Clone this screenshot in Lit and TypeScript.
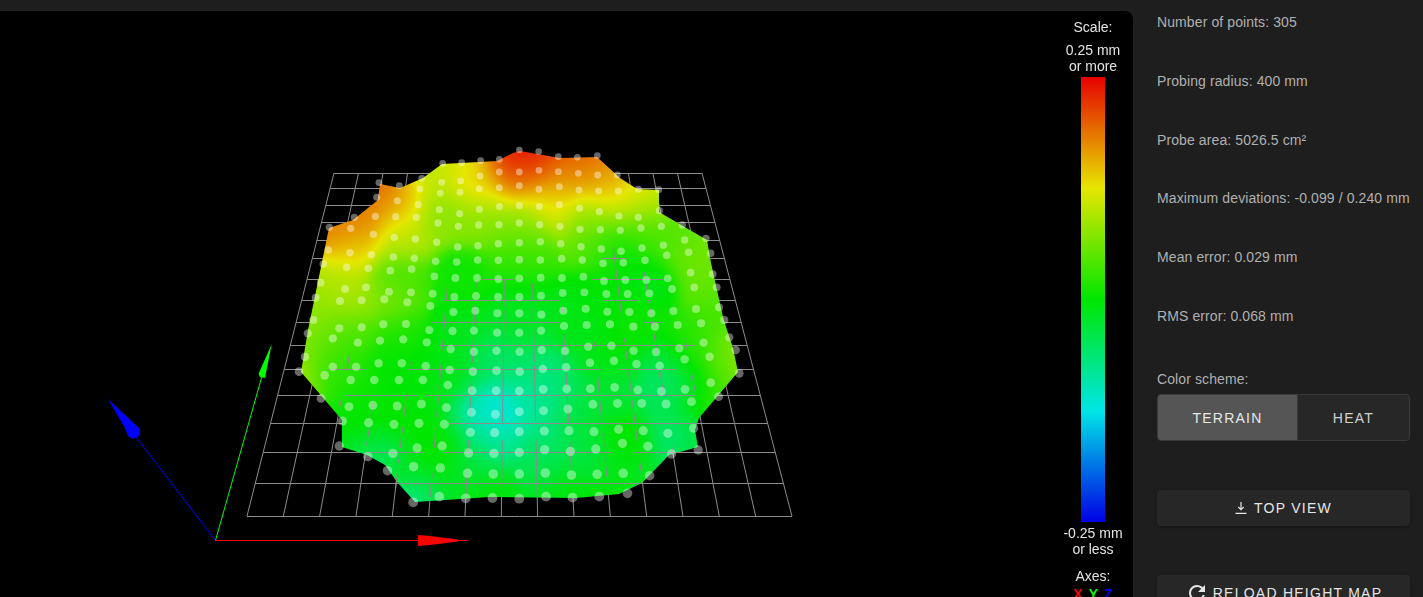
import {LitElement, html, css, svg} from 'lit';
import {customElement} from 'lit/decorators.js';

type P = [number, number];

// surface outline, in page pixels
const OUTLINE: P[] = [
  [329, 228], [353, 220], [378, 200], [380, 184], [400, 188], [423, 178], [442, 164], [497, 161],
  [513, 153], [520, 151], [560, 158], [597, 157], [620, 178], [637, 189], [659, 190], [659, 212],
  [707, 240], [711, 263], [723, 317], [727, 330], [733, 348], [738, 372], [699, 418], [695, 430],
  [698, 447], [669, 455], [642, 483], [619, 494], [576, 498], [490, 497], [415, 502], [397, 482],
  [385, 465], [367, 455], [342, 447], [342, 420], [301, 372], [308, 330],
];

// height samples: x, y, value (-1 blue .. 1 red)
const HEIGHTS: [number, number, number][] = [
  [520, 150, 1.05], [505, 160, .85], [540, 160, .88], [590, 160, .82], [610, 175, .68], [470, 165, .48], [430, 175, .42], [385, 190, .8],
  [360, 220, .72], [335, 232, .75], [400, 205, .55], [440, 215, .3], [480, 190, .55], [520, 178, .72],
  [560, 178, .7], [600, 182, .6], [640, 195, .5], [655, 200, .4], [620, 200, .45], [550, 200, .48],
  [480, 215, .27], [520, 220, .33], [590, 215, .32], [640, 225, .2], [650, 235, .12], [400, 240, .4], [350, 250, .5], [330, 280, .38], [315, 310, .3], [350, 300, .38],
  [390, 298, .3], [400, 280, .12], [460, 280, .03], [520, 245, .18], [520, 265, .08], [600, 240, .18], [620, 250, -.02],
  [680, 235, .15], [705, 250, .25], [687, 247, .25], [650, 280, -.05], [707, 280, .22], [720, 310, .15],
  [600, 300, 0], [520, 300, -.05], [520, 330, -.1], [460, 330, -.05], [400, 330, .05], [350, 330, .15],
  [580, 320, -.05], [640, 320, .03], [700, 340, .12], [730, 350, .3], [735, 372, .28], [690, 345, .05],
  [308, 337, .3], [301, 372, .4], [326, 350, .18], [347, 373, .1], [330, 369, .05], [383, 373, 0],
  [418, 370, 0], [454, 367, -.05], [490, 363, -.22], [525, 373, -.25], [597, 363, -.05], [615, 363, .02],
  [668, 363, -.12], [704, 363, .18], [686, 380, -.25], [661, 390, -.32], [615, 387, -.2], [561, 387, -.27],
  [500, 410, -.5], [472, 413, -.4], [536, 407, -.35], [579, 403, -.12], [618, 400, -.03], [668, 400, -.08],
  [700, 397, .08], [719, 387, .12], [440, 433, 0], [400, 423, .03], [365, 430, .05], [347, 443, 0],
  [383, 453, -.22], [365, 453, -.28], [400, 470, -.02], [436, 457, .02], [469, 463, -.12], [415, 497, -.35],
  [436, 493, -.05], [490, 440, -.32], [544, 430, -.25], [580, 427, -.12], [622, 443, .05], [636, 447, .02],
  [668, 440, -.3], [686, 443, -.2], [697, 447, -.05], [597, 453, -.15], [544, 463, -.18], [561, 490, -.02],
  [615, 490, 0], [490, 493, -.02], [633, 473, -.1], [360, 400, 0], [420, 400, -.02], [440, 385, -.05],
];

const GRID_ROWS = [173, 188, 205, 222, 240, 258, 279, 300, 322, 345, 369, 395, 423, 452, 483, 516];

// grid pieces that poke through the surface: y, x1, x2
const POKE_H: [number, number, number][] = [
  [258, 602, 627], [279, 482, 513], [279, 592, 663], [300, 444, 559], [300, 604, 637], [300, 647, 652],
  [322, 432, 559], [322, 643, 661], [345, 440, 695], [369, 329, 365], [369, 408, 601], [369, 620, 676],
  [395, 345, 417], [395, 426, 695], [423, 449, 699], [452, 365, 424], [452, 444, 611], [452, 633, 697],
  [483, 397, 642],
];

// same for the column lines: column, y1, y2
const POKE_V: [number, number, number][] = [
  [2, 353, 370], [2, 398, 408], [3, 397, 417], [3, 427, 445], [4, 362, 370], [4, 395, 418], [4, 427, 448],
  [4, 452, 463], [4, 473, 490], [5, 285, 300], [5, 312, 330], [5, 340, 350], [5, 363, 390], [5, 397, 417],
  [5, 427, 448], [5, 473, 497], [6, 280, 300], [6, 305, 325], [6, 330, 363], [6, 367, 393], [6, 397, 420],
  [6, 440, 497], [7, 280, 307], [7, 310, 363], [7, 364, 422], [7, 440, 497], [8, 283, 302], [8, 308, 362],
  [8, 365, 422], [8, 440, 497], [9, 307, 313], [9, 333, 363], [9, 373, 387], [9, 396, 423], [9, 442, 478],
  [10, 342, 352], [10, 373, 393], [10, 400, 423], [10, 433, 447], [10, 457, 477], [11, 247, 317],
  [11, 338, 360], [11, 372, 393], [11, 400, 423], [11, 427, 443], [11, 463, 477], [12, 272, 297],
  [12, 300, 327], [12, 330, 360], [12, 370, 397], [12, 447, 457], [13, 338, 350], [13, 373, 395],
  [13, 415, 420],
];

// probe points read off in rows, upper half then lower half
const top = (x: number, y: number): P => [300 + x / 3, 140 + y / 3];
const low = (x: number, y: number): P => [240 + x / 2.8, 330 + y / 3];
const rows = (list: number[][], map: (x: number, y: number) => P) =>
  list.flatMap(r => {
    const out: P[] = [];
    for (let i = 0; i < r.length; i += 2) out.push(map(r[i], r[i + 1]));
    return out;
  });

const POINTS: P[] = [
  ...rows([
    [428,70,485,68,542,62,598,58,658,30,716,35,775,50,832,52,892,47],
    [365,115,425,127,482,123,540,108,598,96,658,96,717,91,775,95,835,100,893,105,952,105],
    [237,128,298,137,360,147,421,160,480,157,538,146,598,143,658,137,717,148,778,140,837,150,896,153,955,153,1015,148,1076,149],
    [230,172,292,182,355,194,418,209,479,221,538,208,598,200,658,197,718,200,778,194,839,205,898,215,957,228,1015,232,1078,212],
    [163,232,226,229,287,230,349,232,414,249,475,259,536,255,597,254,658,249,719,254,780,259,840,268,901,269,961,271,1023,264,1084,259,1147,255],
    [88,262,152,265,220,283,283,292,346,297,410,307,473,321,534,317,595,311,658,308,721,305,782,311,843,320,904,327,963,334,1026,324,1090,316,1154,300,1218,295],
    [85,330,150,338,214,344,280,351,343,355,407,364,470,366,533,360,595,361,658,359,721,360,785,356,847,360,909,370,970,368,1035,361,1100,346,1166,337,1232,340],
    [70,372,140,382,205,385,271,392,335,387,403,409,466,414,531,414,595,417,658,415,722,413,786,414,850,410,912,423,976,420,1039,420,1103,415,1172,398,1238,402],
    [62,428,135,447,198,442,267,455,333,457,398,461,463,471,528,468,594,471,658,471,723,467,788,459,853,457,919,462,983,462,1048,460,1116,447,1183,442,1250,442],
    [47,473,120,483,185,481,253,478,322,487,391,498,460,516,526,512,592,520,658,520,724,524,790,512,857,506,922,515,988,516,1054,520,1120,513,1188,507,1257,502],
    [40,540,118,565,185,562,250,553,318,552],
    [792,558,860,555,930,553,1000,560,1065,560,1133,555,1203,550,1273,540],
  ], top),
  ...rows([
    [530,0,595,3,655,2,720,8,782,8,843,2],
    [190,10,260,25,330,38,392,32,457,28,523,37,590,57,655,65,718,62,783,65,845,60,910,63,975,50,1040,47,1102,62,1165,66,1230,55,1298,38,1370,22],
    [182,80,260,110,325,110,388,100,453,100,520,108,587,120,652,125,718,122,783,125,848,117,913,112,980,98,1047,92,1110,102,1175,107,1245,88,1315,80,1388,60],
    [165,125,237,136,310,150,376,150,445,150,512,150,582,165,650,182,717,182,782,183,849,178,915,177,981,176,1049,172,1114,180,1180,184,1246,178,1318,158,1398,130],
    [227,205,305,230,372,226,440,228,508,222,578,233,648,247,715,253,782,245,850,242,918,237,988,223,1057,220,1125,220,1193,222,1264,215,1340,200],
    [287,273,360,278,431,283,501,280,572,283,645,307,713,308,782,305,852,303,921,302,991,305,1060,298,1129,302,1198,310,1270,295],
    [278,348,358,380,428,370,496,354,566,348,640,369,711,370,782,367,853,359,925,364,996,357,1071,340,1142,349,1208,372,1283,360],
    [413,422,486,410,561,414,637,430,709,432,782,432,855,429,928,435,1000,433,1073,430,1147,437],
    [485,517,558,500,632,505,707,504,782,506,857,500,931,503,1006,500,1085,490],
  ], low),
];

const colorAt = (v: number): number[] => {
  // same stops as the scale bar: red, yellow, green, cyan, blue
  const stops = [[230, 0, 0], [230, 230, 0], [0, 230, 0], [0, 230, 230], [0, 0, 230]];
  const t = Math.min(3.999, Math.max(0, (1 - v) * 2));
  const i = Math.floor(t);
  const f = t - i;
  return stops[i].map((c, k) => c + (stops[i + 1][k] - c) * f);
};

const columnX = (col: number, y: number) => {
  const t = (y - 173) / 343;
  return 334 - 87 * t + col * (24.53 + 11.8 * t);
};

@customElement('height-map-view')
export class HeightMapView extends LitElement {
  static styles = css`
    :host {
      display: block;
      position: relative;
      flex: 1;
      margin-top: 11px;
      background: #000;
      border-top-right-radius: 8px;
      overflow: hidden;
    }
    canvas {
      display: block;
    }
    .legend {
      position: absolute;
      top: 0;
      right: 8px;
      width: 64px;
      display: flex;
      flex-direction: column;
      align-items: center;
      padding-top: 8px;
      font: 14px/16px 'Liberation Sans', Arial, sans-serif;
      color: #e4e4e4;
      text-align: center;
    }
    .range {
      margin-top: 7px;
    }
    .bar {
      width: 24px;
      height: 445px;
      margin: 3px 0;
      background: linear-gradient(#e60000, #e6e600 25%, #00e600 50%, #00e6e6 75%, #0000e6);
    }
    .range.min {
      margin-top: 0;
    }
    .axes {
      margin-top: 11px;
    }
    .names {
      display: flex;
      gap: 6px;
      margin-top: 2px;
      font-weight: 700;
    }
    .x {
      color: #f00;
    }
    .y {
      color: #0f0;
    }
    .z {
      color: #00f;
    }
  `;

  override firstUpdated() {
    const canvas = this.renderRoot.querySelector('canvas') as HTMLCanvasElement;
    const ctx = canvas.getContext('2d')!;
    ctx.translate(0, -11);
    this.drawGrid(ctx);
    this.drawSurface(ctx);
    this.drawPokes(ctx);

    ctx.fillStyle = 'rgba(255,255,255,.4)';
    for (const [x, y] of POINTS) {
      ctx.beginPath();
      ctx.arc(x, y, 3.3 + (y - 150) / 350 * 1.6, 0, Math.PI * 2);
      ctx.fill();
    }
    this.drawAxes(ctx);
  }

  private drawGrid(ctx: CanvasRenderingContext2D) {
    ctx.strokeStyle = '#8c8c8c';
    ctx.lineWidth = 1;
    ctx.beginPath();
    for (const y of GRID_ROWS) {
      ctx.moveTo(columnX(0, y), y + .5);
      ctx.lineTo(columnX(15, y), y + .5);
    }
    for (let c = 0; c <= 15; c++) {
      ctx.moveTo(columnX(c, 173), 173);
      ctx.lineTo(columnX(c, 516), 516);
    }
    ctx.stroke();
  }

  private drawSurface(ctx: CanvasRenderingContext2D) {
    const [x0, y0, w, h] = [295, 145, 450, 365];
    const layer = document.createElement('canvas');
    layer.width = w;
    layer.height = h;
    const lctx = layer.getContext('2d')!;
    const img = lctx.createImageData(w, h);
    const sigma2 = 2 * 17 * 17;
    for (let j = 0; j < h; j++) {
      for (let i = 0; i < w; i++) {
        let sum = 0;
        let weight = 1e-9;
        for (const [hx, hy, v] of HEIGHTS) {
          const dx = x0 + i - hx;
          const dy = y0 + j - hy;
          const g = Math.exp(-(dx * dx + dy * dy) / sigma2);
          sum += g * v;
          weight += g;
        }
        const c = colorAt(sum / weight);
        const o = (j * w + i) * 4;
        img.data[o] = c[0];
        img.data[o + 1] = c[1];
        img.data[o + 2] = c[2];
        img.data[o + 3] = 255;
      }
    }
    lctx.putImageData(img, 0, 0);

    ctx.save();
    ctx.beginPath();
    OUTLINE.forEach(([x, y], i) => (i ? ctx.lineTo(x, y) : ctx.moveTo(x, y)));
    ctx.closePath();
    ctx.clip();
    ctx.drawImage(layer, x0, y0);
    ctx.restore();
  }

  private drawPokes(ctx: CanvasRenderingContext2D) {
    ctx.strokeStyle = '#8f8a8f';
    ctx.beginPath();
    for (const [y, a, b] of POKE_H) {
      ctx.moveTo(a, y + .5);
      ctx.lineTo(b, y + .5);
    }
    for (const [c, a, b] of POKE_V) {
      ctx.moveTo(columnX(c, a), a);
      ctx.lineTo(columnX(c, b), b);
    }
    ctx.stroke();
  }

  private drawAxes(ctx: CanvasRenderingContext2D) {
    const axis = (color: string, end: P, head: P[]) => {
      ctx.strokeStyle = ctx.fillStyle = color;
      ctx.beginPath();
      ctx.moveTo(215.5, 540.5);
      ctx.lineTo(end[0], end[1]);
      ctx.stroke();
      ctx.beginPath();
      head.forEach(([x, y], i) => (i ? ctx.lineTo(x, y) : ctx.moveTo(x, y)));
      ctx.fill();
    };
    axis('#00f', [136, 437], [[108, 399], [125, 428], [128, 436], [133, 439], [140, 435], [140, 429]]);
    axis('#0f0', [262, 376], [[271.7, 344], [258.5, 374], [260, 377], [265, 378]]);
    axis('#f00', [468, 540.5], [[418, 535], [430, 536], [450, 538.5], [458, 539.5], [458, 541.5], [450, 542.5], [430, 545], [418, 546]]);
  }

  override render() {
    return html`
      <canvas width="1133" height="586"></canvas>
      <div class="legend">
        <div>Scale:</div>
        <div class="range">0.25 mm<br />or more</div>
        <div class="bar"></div>
        <div class="range min">-0.25 mm<br />or less</div>
        <div class="axes">Axes:</div>
        <div class="names"><span class="x">X</span><span class="y">Y</span><span class="z">Z</span></div>
      </div>
    `;
  }
}

const stats = [
  'Number of points: 305',
  'Probing radius: 400 mm',
  'Probe area: 5026.5 cm²',
  'Maximum deviations: -0.099 / 0.240 mm',
  'Mean error: 0.029 mm',
  'RMS error: 0.068 mm',
];

@customElement('app-root')
export class AppRoot extends LitElement {
  static styles = css`
    :host {
      display: flex;
      height: 597px;
      overflow: hidden;
      background: #1e1e1e;
    }
    height-map-view {
      flex: 0 0 1133px;
    }
    .side {
      flex: 1;
      display: flex;
      flex-direction: column;
      padding: 12px 13px 0 24px;
      font: 14px/20px 'Liberation Sans', Arial, sans-serif;
      letter-spacing: .1px;
      color: #b0b0b0;
    }
    .stats {
      flex: none;
      display: flex;
      flex-direction: column;
      gap: 38.8px;
    }
    .label {
      flex: none;
      margin-top: 43px;
      margin-bottom: 5px;
    }
    .toggle {
      flex: none;
      display: flex;
      height: 47px;
      box-sizing: border-box;
      border: 1px solid #3a3a3a;
      border-radius: 4px;
      background: #272727;
      overflow: hidden;
    }
    .toggle div {
      display: flex;
      align-items: center;
      justify-content: center;
      padding-top: 2px;
      box-sizing: border-box;
      letter-spacing: 1.25px;
      color: #d0d0d0;
    }
    .toggle .on {
      flex: 0 0 140px;
      background: #555;
      color: #e8e8e8;
      border-right: 1px solid #3a3a3a;
    }
    .toggle .off {
      flex: 1;
    }
    .btn {
      flex: none;
      display: flex;
      align-items: center;
      justify-content: center;
      height: 36px;
      margin-top: 49px;
      border-radius: 4px;
      background: #272727;
      box-shadow: 0 1px 3px rgba(0, 0, 0, .3);
      letter-spacing: 1.25px;
      color: #e6e6e6;
    }
    .btn svg {
      flex: none;
      fill: currentColor;
    }
    .btn .down {
      margin-right: 7px;
    }
    .btn .reload {
      margin-right: 4px;
    }
  `;

  override render() {
    return html`
      <height-map-view></height-map-view>
      <div class="side">
        <div class="stats">${stats.map(s => html`<div>${s}</div>`)}</div>
        <div class="label">Color scheme:</div>
        <div class="toggle">
          <div class="on">TERRAIN</div>
          <div class="off">HEAT</div>
        </div>
        <div class="btn">
          <svg class="down" width="12" height="12" viewBox="0 0 12 12">
            ${svg`<path d="M5.4 0h1.2v6.2l1.7-1.6.8.8L6 8.5 2.9 5.4l.8-.8 1.7 1.6zM.5 10.8h11V12H.5z"/>`}
          </svg>
          TOP VIEW
        </div>
        <div class="btn">
          <svg class="reload" width="24" height="24" viewBox="0 0 24 24">
            ${svg`<path d="M17.65,6.35C16.2,4.9 14.21,4 12,4A8,8 0 0,0 4,12A8,8 0 0,0 12,20C15.73,20 18.84,17.45 19.73,14H17.65C16.83,16.33 14.61,18 12,18A6,6 0 0,1 6,12A6,6 0 0,1 12,6C13.66,6 15.14,6.69 16.22,7.78L13,11H20V4L17.65,6.35Z"/>`}
          </svg>
          RELOAD HEIGHT MAP
        </div>
      </div>
    `;
  }
}
